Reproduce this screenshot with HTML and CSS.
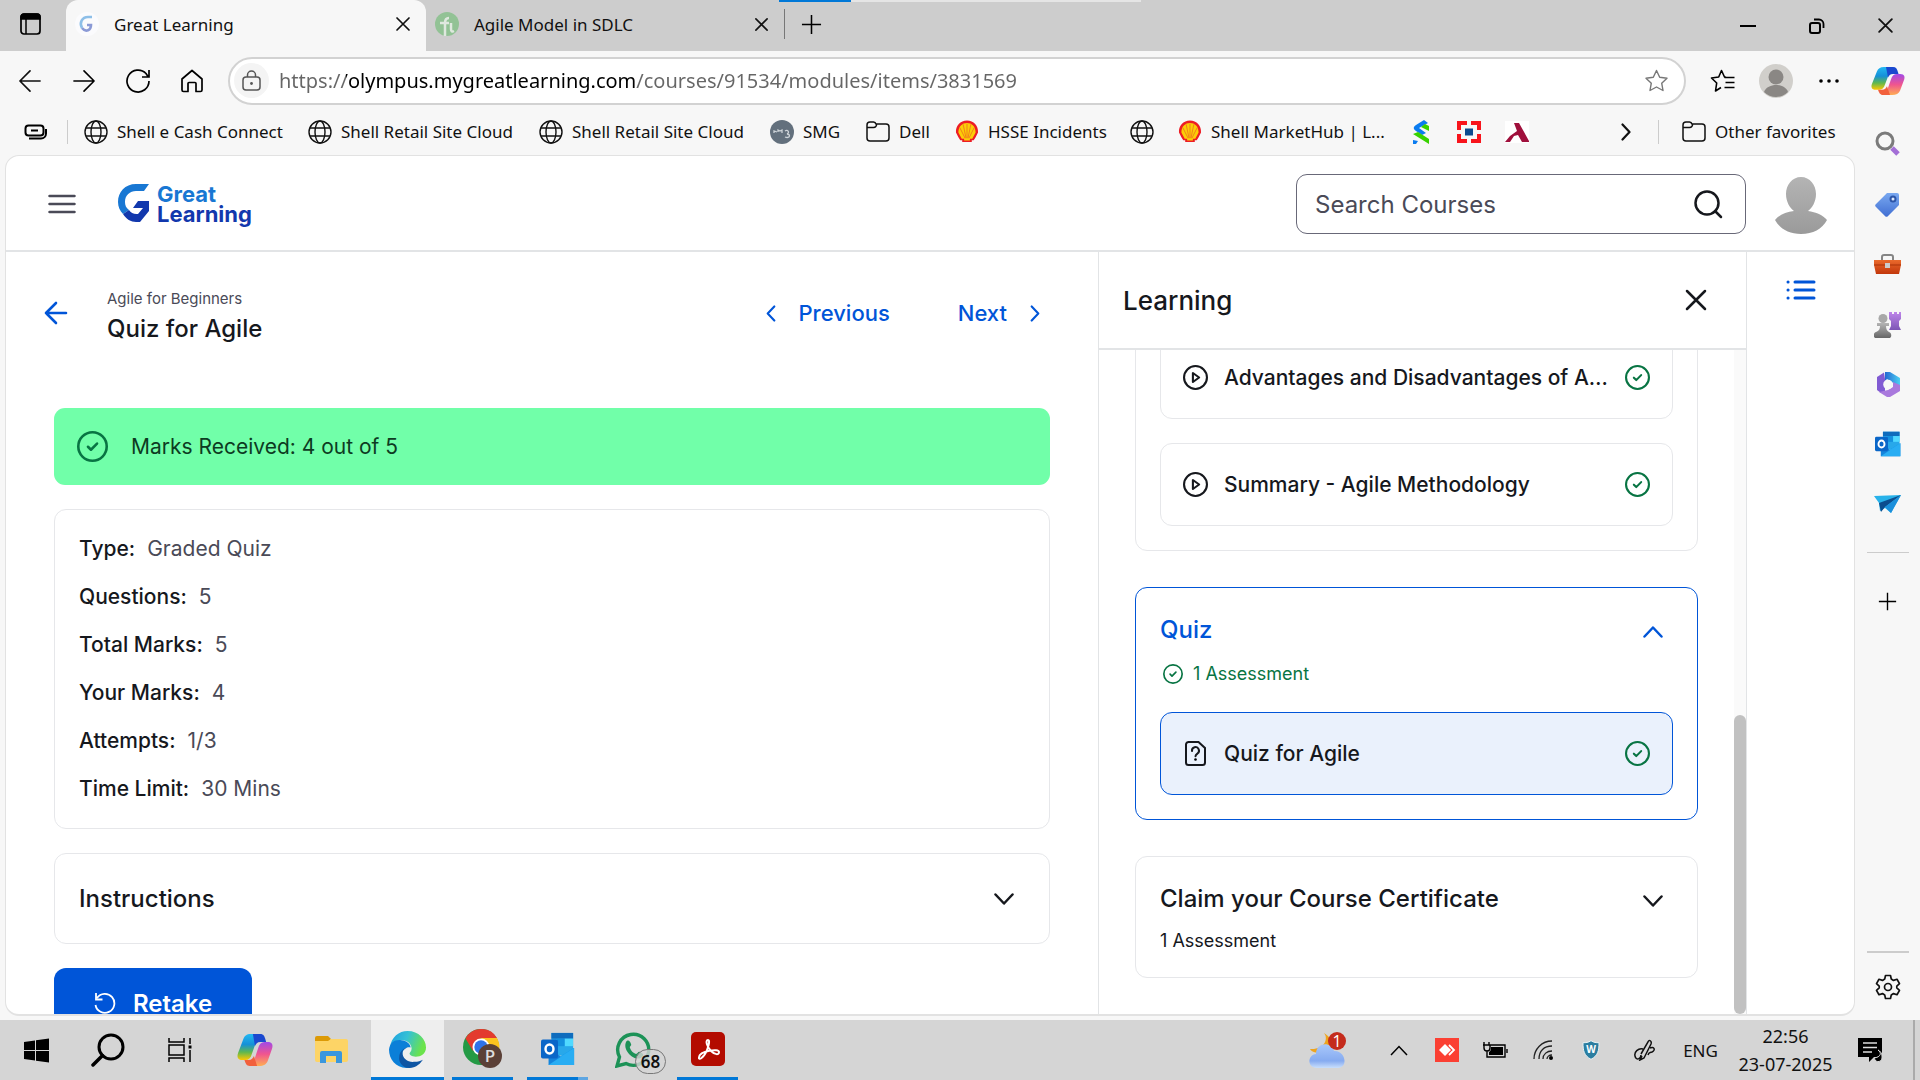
FILE: index.html
```html
<!DOCTYPE html>
<html lang="en">
<head>
<meta charset="utf-8">
<title>Great Learning</title>
<link rel="stylesheet" href="styles.css">
</head>
<body>
<svg class="defs" aria-hidden="true">
  <defs>
    <linearGradient id="cpA" x1="0" y1="0" x2="0" y2="1"><stop offset="0" stop-color="#22b8f2"/><stop offset=".4" stop-color="#1590d8"/><stop offset=".7" stop-color="#5fb84f"/><stop offset="1" stop-color="#ffc800"/></linearGradient>
    <linearGradient id="cpB" x1="0" y1="0" x2="0" y2="1"><stop offset="0" stop-color="#a049e8"/><stop offset=".5" stop-color="#f0558f"/><stop offset="1" stop-color="#ffae52"/></linearGradient>
    <linearGradient id="edA" x1="0" y1="0" x2="1" y2=".3"><stop offset="0" stop-color="#1b9de2"/><stop offset=".5" stop-color="#35c1d5"/><stop offset="1" stop-color="#6be34b"/></linearGradient>
    <linearGradient id="gray" x1="0" y1="0" x2="0" y2="1"><stop offset="0" stop-color="#b4b4b4"/><stop offset="1" stop-color="#9a9a9a"/></linearGradient>
    <linearGradient id="tagG" x1="0" y1="0" x2="0" y2="1"><stop offset="0" stop-color="#79a8f0"/><stop offset="1" stop-color="#416fd3"/></linearGradient>
    <linearGradient id="boxG" x1="0" y1="0" x2="0" y2="1"><stop offset="0" stop-color="#ea6a2c"/><stop offset="1" stop-color="#c2370b"/></linearGradient>
    <linearGradient id="pur" x1="0" y1="0" x2="0" y2="1"><stop offset="0" stop-color="#be85ea"/><stop offset="1" stop-color="#7d57b5"/></linearGradient>
    <linearGradient id="pawn" x1="0" y1="0" x2="0" y2="1"><stop offset="0" stop-color="#b5b5b5"/><stop offset="1" stop-color="#666"/></linearGradient>
    <linearGradient id="cyan" x1="0" y1="0" x2="1" y2="0"><stop offset="0" stop-color="#2468d2"/><stop offset="1" stop-color="#4cd0f2"/></linearGradient>
    <linearGradient id="cloud" x1="0" y1="0" x2="0" y2="1"><stop offset="0" stop-color="#a9c8fb"/><stop offset=".7" stop-color="#86abf0"/><stop offset="1" stop-color="#c9dffc"/></linearGradient>
  </defs>
  <symbol id="globe" viewBox="0 0 24 24"><g fill="none" stroke="#111" stroke-width="1.4"><circle cx="12" cy="12" r="11"/><ellipse cx="12" cy="12" rx="5" ry="11"/><path d="M2 8h20M2 16h20"/></g></symbol>
  <symbol id="folder" viewBox="0 0 24 24"><path d="M1 5a3 3 0 0 1 3-3h3.500a3 3 0 0 1 2.500 2H20a3 3 0 0 1 3 3v11a3 3 0 0 1-3 3H4a3 3 0 0 1-3-3zM1 7.500h6.500a3 3 0 0 0 3-3.500" fill="none" stroke="#111" stroke-width="1.500" stroke-linejoin="round"/></symbol>
  <symbol id="shell" viewBox="0 0 24 24"><path d="M7 23v-2H5L3 18 .5 13C0 6 5 .5 12 .5S24 6 23.500 13L21 18l-2 3h-2v2z" fill="#ed1c24"/><path d="M9 21.500v-2H6.500L3 13C3 6.500 7 3 12 3s9 3.500 9 10l-3.500 6.500H15v2z" fill="#fbce07"/><path d="M12 19V4M11 19 8 4.500M13 19l3-14.500M10 19 4.500 8M14 19l5.500-11" stroke="#ee5a24" stroke-width=".7"/></symbol>
  <symbol id="x" viewBox="0 0 16 16"><path d="M2 2l12 12M14 2 2 14" stroke="currentColor" stroke-width="1.700" stroke-linecap="round"/></symbol>
  <symbol id="plus" viewBox="0 0 22 22"><path d="M11 1v20M1 11h20" stroke="#000" stroke-width="1.600"/></symbol>
  <symbol id="check" viewBox="0 0 24 24"><g fill="none" stroke="currentColor" stroke-width="2"><circle cx="12" cy="12" r="11"/><path d="m8.500 12.200 2.300 2.300 4.700-4.800" stroke-linecap="round" stroke-linejoin="round"/></g></symbol>
  <symbol id="play" viewBox="0 0 24 24"><g fill="none" stroke="currentColor" stroke-width="2"><circle cx="12" cy="12" r="11"/><path d="M9.500 7.700v8.600l6-4.300z" stroke-linejoin="round"/></g></symbol>
  <symbol id="chev" viewBox="0 0 20 12"><path d="m1.500 1.500 8.500 9 8.500-9" fill="none" stroke="currentColor" stroke-width="2.500" stroke-linecap="round" stroke-linejoin="round"/></symbol>
  <symbol id="chevr" viewBox="0 0 10 18"><path d="m1.500 1.500 7 7.500-7 7.500" fill="none" stroke="currentColor" stroke-width="2.200" stroke-linecap="round" stroke-linejoin="round"/></symbol>
  <symbol id="arrow" viewBox="0 0 24 24"><path d="M23 12H1M12 1 1 12l11 11" fill="none" stroke="currentColor" stroke-width="1.800" stroke-linecap="round" stroke-linejoin="round"/></symbol>
  <symbol id="copilot" viewBox="0 0 34 34"><path d="M13 1h11c-3 0-4 2-5 5l-5 15c-1 4-3 6-6 6H5c-5 0-5-4-4-7L6 6c1-3 3-5 7-5z" fill="url(#cpA)"/><path d="M15 1h7c3 0 4 2 5 6l.5 2H22c-3 0-4 2-5 4z" fill="#1a48cf"/><path d="M21 33H11c3 0 4-2 5-5l4-13c1-4 3-6 6-6h3c5 0 5 4 4 7l-4 12c-1 3-4 5-8 5z" fill="url(#cpB)"/><path d="M19 33h-7c-3 0-4-3-5-6h4c3 0 4-2 5-4z" fill="#f2603c"/></symbol>
  <symbol id="outlook" viewBox="0 0 36 36"><path d="M11 1h23v24H11z" fill="#28a8ea"/><path d="M11 1h23v6H11z" fill="#0f6cbd"/><path d="M25 7h9v8h-9z" fill="#50d9ff"/><path d="M17 7h8v8h-8z" fill="#1490df"/><path d="M8 17l13 9 14-9v18H8z" fill="#1484dc"/><path d="M35 17v18L20 26z" fill="#1fa4ef"/><path d="M35 17 8 35h27z" fill="#29adf3"/><rect y="8" width="18" height="20" rx="2" fill="#0a66c8"/><ellipse cx="9" cy="18" rx="4.200" ry="4.800" fill="none" stroke="#fff" stroke-width="2.600"/></symbol>
</svg>

<header class="tabstrip">
  <button class="icon-btn workspaces" aria-label="Tab actions"><svg width="21" height="22" viewBox="0 0 21 22"><rect x="1" y="1" width="19" height="20" rx="3" fill="none" stroke="#000" stroke-width="1.700"/><path d="M1 6V4a3 3 0 0 1 3-3h13a3 3 0 0 1 3 3v2zM6 6v15" stroke="#000" stroke-width="1.500"/></svg></button>
  <div class="tab active">
    <svg width="24" height="24" viewBox="0 0 24 24"><circle cx="12" cy="12" r="12" fill="#fbfbfd"/><path d="M17 5h-4C7 5 4 11 7 16" fill="none" stroke="#8dbfe8" stroke-width="2.600"/><path d="M7 16c4 5 9 2 9-3h-4" fill="none" stroke="#8b9ad6" stroke-width="2.600"/></svg>
    <span class="tab-title">Great Learning</span>
    <button class="icon-btn" aria-label="Close tab"><svg width="16" height="16"><use href="#x"/></svg></button>
  </div>
  <div class="tab">
    <svg width="24" height="24" viewBox="0 0 24 24"><circle cx="12" cy="12" r="12" fill="#92c295"/><path d="M10 24V11c0-3 1-5 4-5M5 11h9M16 11v6c0 2 1 3 3 2" fill="none" stroke="#dfe8df" stroke-width="2.500"/></svg>
    <span class="tab-title">Agile Model in SDLC</span>
    <button class="icon-btn" aria-label="Close tab"><svg width="15" height="15"><use href="#x"/></svg></button>
  </div>
  <button class="icon-btn new-tab" aria-label="New tab"><svg width="21" height="21"><use href="#plus"/></svg></button>
  <div class="window-btns">
    <button class="icon-btn" aria-label="Minimize"><svg width="16" height="16"><path d="M0 8h16" stroke="#000" stroke-width="2"/></svg></button>
    <button class="icon-btn" aria-label="Restore"><svg width="16" height="16" viewBox="0 0 16 16"><rect x="1" y="5" width="10" height="10" rx="2" fill="none" stroke="#000" stroke-width="2"/><path d="M5 1.500h5a4.500 4.500 0 0 1 4.500 4.500v4" fill="none" stroke="#000" stroke-width="1.800"/></svg></button>
    <button class="icon-btn" aria-label="Close"><svg width="17" height="17"><use href="#x"/></svg></button>
  </div>
  <div class="progress"><span></span></div>
</header>

<div class="browser">
  <div class="window">
    <nav class="toolbar" aria-label="Browser">
      <button class="icon-btn" aria-label="Back"><svg width="24" height="22"><use href="#arrow"/></svg></button>
      <button class="icon-btn" aria-label="Forward"><svg width="24" height="22" viewBox="0 0 24 24"><path d="M1 12h22M12 1l11 11-11 11" fill="none" stroke="#000" stroke-width="1.700" stroke-linecap="round" stroke-linejoin="round"/></svg></button>
      <button class="icon-btn" aria-label="Reload"><svg width="24" height="24" viewBox="0 0 24 24"><path d="M23 12A11 11 0 1 1 20 4.500l2 3M23 1v7h-7" fill="none" stroke="#000" stroke-width="1.700"/></svg></button>
      <button class="icon-btn" aria-label="Home"><svg width="24" height="24" viewBox="0 0 24 24"><path d="M2 10 12 1.500 22 10v11a1.500 1.500 0 0 1-1.500 1.500H16v-8a1 1 0 0 0-1-1H9a1 1 0 0 0-1 1v8H3.500A1.500 1.500 0 0 1 2 21z" fill="none" stroke="#000" stroke-width="1.700" stroke-linejoin="round"/></svg></button>
      <div class="address">
        <button class="lock" aria-label="Site information"><svg width="19" height="21" viewBox="0 0 19 21"><rect x="1" y="7" width="17" height="13" rx="3" fill="none" stroke="#555" stroke-width="1.500"/><path d="M5.500 7V5a4 4 0 0 1 8 0v2" fill="none" stroke="#555" stroke-width="1.500"/><circle cx="9.500" cy="13.500" r="1.400" fill="#555"/></svg></button>
        <input class="url" type="text" aria-label="Address" value="https://olympus.mygreatlearning.com/courses/91534/modules/items/3831569">
        <button class="icon-btn" aria-label="Add to favorites"><svg width="25" height="24" viewBox="0 0 24 24"><path d="m12 1.500 3.200 6.700 7.300 1-5.300 5 1.300 7.300L12 18l-6.500 3.500 1.300-7.300-5.300-5 7.300-1z" fill="none" stroke="#777" stroke-width="1.400" stroke-linejoin="round"/></svg></button>
      </div>
      <button class="icon-btn" aria-label="Favorites"><svg width="25" height="24" viewBox="0 0 24 24"><path d="m15.500 8.200-1.500-.2L11 1.500 8.200 8 1 9l5.200 5-1.200 8 5.500-3.500" fill="none" stroke="#000" stroke-width="1.600" stroke-linejoin="round"/><path d="M14 8.500h10M15 13.500h9M14 18.500h10" stroke="#000" stroke-width="1.600"/></svg></button>
      <button class="icon-btn" aria-label="Profile"><svg width="34" height="34" viewBox="0 0 34 34"><circle cx="17" cy="17" r="17" fill="#d1cfcb"/><circle cx="17" cy="13" r="7.500" fill="#8a8784"/><path d="M5 28c2-5 7-7 12-7s10 2 12 7a17 17 0 0 1-24 0z" fill="#8a8784"/></svg></button>
      <button class="icon-btn more" aria-label="More"><svg width="20" height="6" viewBox="0 0 20 6"><circle cx="2" cy="3" r="1.800"/><circle cx="10" cy="3" r="1.800"/><circle cx="18" cy="3" r="1.800"/></svg></button>
    </nav>

    <nav class="bookmarks" aria-label="Favorites bar">
      <button class="icon-btn" aria-label="Workspaces"><svg width="24" height="16" viewBox="0 0 24 16"><rect x="1.500" y="1.500" width="18" height="10" rx="3" fill="none" stroke="#000" stroke-width="2"/><path d="M7 6.500h7M5 14.500h12a5 5 0 0 0 5-5V5" fill="none" stroke="#000" stroke-width="2"/></svg></button>
      <i class="sep"></i>
      <a href="#"><svg width="24" height="24"><use href="#globe"/></svg>Shell e Cash Connect</a>
      <a href="#"><svg width="24" height="24"><use href="#globe"/></svg>Shell Retail Site Cloud</a>
      <a href="#"><svg width="24" height="24"><use href="#globe"/></svg>Shell Retail Site Cloud</a>
      <a href="#"><svg width="24" height="24" viewBox="0 0 24 24"><circle cx="12" cy="12" r="12" fill="#63707d"/><path d="M4 13v-2l3 1M8 12v-2l2 1 2-1v3M15 11c3-2 5 2 2 3 4 0 3 5-2 3" fill="none" stroke="#cdd3d8" stroke-width="1.300"/></svg>SMG</a>
      <a href="#"><svg width="24" height="24"><use href="#folder"/></svg>Dell</a>
      <a href="#"><svg width="24" height="23"><use href="#shell"/></svg>HSSE Incidents</a>
      <a href="#" aria-label="Site"><svg width="24" height="24"><use href="#globe"/></svg></a>
      <a href="#"><svg width="24" height="23"><use href="#shell"/></svg>Shell MarketHub | L...</a>
      <a href="#" aria-label="Bank"><svg width="16" height="24" viewBox="0 0 16 24"><path d="M11 0 3 5c-3 2-3 4 0 6l6 4 4-2-7-5 9-5z" fill="#0a7cf0"/><path d="m0 14 5-2 11 7v5zM8 7l4-3 4 2v5z" fill="#38d200"/><path d="M0 20l5 1-2 3H0z" fill="#0a7cf0"/></svg></a>
      <a href="#" aria-label="HDFC"><svg width="24" height="22" viewBox="0 0 24 22"><path fill="#f8141c" d="M0 0h10v4H4v5H0zM14 0h10v9h-4V4h-6zM0 13h4v5h6v4H0zM20 13h4v9H14v-4h6z"/><path fill="#0b4a8f" d="M8 7.500h8v7H8z"/></svg></a>
      <a href="#" aria-label="Axis"><svg width="24" height="22" viewBox="0 0 24 22"><path fill="#fff" d="M0 0h24v22H0z"/><path fill="#a0103c" d="M9 2h5l10 18v1h-7l-4-7-4 1-4 6H0l5-6 7-5z"/></svg></a>
      <button class="icon-btn" aria-label="More favorites"><svg width="10" height="18"><use href="#chevr"/></svg></button>
      <i class="sep"></i>
      <a href="#"><svg width="24" height="24"><use href="#folder"/></svg>Other favorites</a>
    </nav>

    <div class="page">
      <header class="site-header">
        <button class="icon-btn menu" aria-label="Menu"><svg width="28" height="20"><path d="M1.500 2h25M1.500 10h25M1.500 18h25" stroke="#4a4a57" stroke-width="2.500" stroke-linecap="round"/></svg></button>
        <a class="logo" href="#">
          <svg width="32" height="39" viewBox="0 0 32 39"><path d="M31 0H18C7 0 0 8 0 18c0 5 2 9 5 12l6-4c-3-2-4-5-4-8C7 11 12 7 18 7h8z" fill="#1877d3"/><path d="m5 30 6-4c2 3 5 4.500 9 4l5-6H15l5-7h11v10l-9 11h-4C13 38 8 35 5 30z" fill="#1238ad"/></svg>
          <span class="logo-text"><span class="great">Great</span><span>Learning</span></span>
        </a>
        <label class="search">
          <input type="search" placeholder="Search Courses" aria-label="Search Courses">
          <svg width="29" height="29" viewBox="0 0 29 29"><circle cx="13" cy="13" r="11.500" fill="none" stroke="#16181d" stroke-width="2.500"/><path d="m21 21 6 6" stroke="#16181d" stroke-width="2.500" stroke-linecap="round"/></svg>
        </label>
        <button class="icon-btn avatar" aria-label="Account"><svg width="52" height="57" viewBox="0 0 52 57"><path d="M26 0c9 0 15 8 15 17 0 8-4 14-8 17 8 1 15 4 19 9-5 9-14 14-26 14S5 52 0 43c4-5 11-8 19-9-4-3-8-9-8-17C11 8 17 0 26 0z" fill="url(#gray)"/></svg></button>
      </header>

      <div class="columns">
        <main class="content">
          <div class="lesson-head">
            <a class="back" href="#" aria-label="Back"><svg width="24" height="24" viewBox="0 0 24 24"><path d="M22 12H2M12 2 2 12l10 10" fill="none" stroke="currentColor" stroke-width="2.600" stroke-linecap="round" stroke-linejoin="round"/></svg></a>
            <div class="titles"><p>Agile for Beginners</p><h1>Quiz for Agile</h1></div>
            <nav class="pager">
              <a href="#"><svg class="flip" width="10" height="17"><use href="#chevr"/></svg>Previous</a>
              <a href="#">Next<svg width="10" height="17"><use href="#chevr"/></svg></a>
            </nav>
          </div>
          <div class="stack">
            <div class="marks"><svg width="31" height="31"><use href="#check"/></svg>Marks Received: 4 out of 5</div>
            <dl class="card facts">
              <div><dt>Type:</dt><dd>Graded Quiz</dd></div>
              <div><dt>Questions:</dt><dd>5</dd></div>
              <div><dt>Total Marks:</dt><dd>5</dd></div>
              <div><dt>Your Marks:</dt><dd>4</dd></div>
              <div><dt>Attempts:</dt><dd>1/3</dd></div>
              <div><dt>Time Limit:</dt><dd>30 Mins</dd></div>
            </dl>
            <button class="card instructions">Instructions<svg width="20" height="12"><use href="#chev"/></svg></button>
            <button class="retake"><svg width="22" height="22" viewBox="0 0 22 22"><path d="M3 6a9.500 9.500 0 1 1-1.500 7M2 1v6.500h6.500" fill="none" stroke="#fff" stroke-width="1.800"/></svg>Retake</button>
          </div>
        </main>

        <aside class="panel">
          <div class="panel-head"><h2>Learning</h2><button class="icon-btn" aria-label="Close panel"><svg width="24" height="24"><use href="#x"/></svg></button></div>
          <div class="panel-body">
            <div class="modules">
              <section class="card module">
                <a class="item" href="#"><svg width="25" height="25"><use href="#play"/></svg><span>Advantages and Disadvantages of Agile Methodology</span><svg class="done" width="25" height="25"><use href="#check"/></svg></a>
                <a class="item" href="#"><svg width="25" height="25"><use href="#play"/></svg><span>Summary - Agile Methodology</span><svg class="done" width="25" height="25"><use href="#check"/></svg></a>
              </section>
              <section class="card module current">
                <button class="module-head"><span class="module-text"><strong>Quiz</strong><small class="done"><svg width="20" height="20"><use href="#check"/></svg>1 Assessment</small></span><svg class="up" width="20" height="12"><use href="#chev"/></svg></button>
                <a class="item" href="#"><svg width="25" height="25" viewBox="0 0 25 25"><path d="M5 1h10.500L22 7v14.500a2.500 2.500 0 0 1-2.500 2.500H5.500A2.500 2.500 0 0 1 3 21.500v-18A2.500 2.500 0 0 1 5.500 1z" fill="none" stroke="currentColor" stroke-width="2"/><path d="M9 10a3.500 3.500 0 1 1 5.500 2.500c-1.300 1-2 1.500-2 2.700" fill="none" stroke="currentColor" stroke-width="2" stroke-linecap="round"/><circle cx="12.500" cy="18.500" r="1.300"/></svg><span>Quiz for Agile</span><svg class="done" width="25" height="25"><use href="#check"/></svg></a>
              </section>
              <section class="card module">
                <button class="module-head"><span class="module-text"><strong>Claim your Course Certificate</strong><small>1 Assessment</small></span><svg width="20" height="12"><use href="#chev"/></svg></button>
              </section>
            </div>
            <div class="scrollbar"><span></span></div>
          </div>
        </aside>

        <div class="rail"><button class="icon-btn" aria-label="Outline"><svg width="30" height="20" viewBox="0 0 30 20"><path d="M9 2h19M9 10h19M9 18h19M2 2h.1M2 10h.1M2 18h.1" stroke="#0055d8" stroke-width="3" stroke-linecap="round"/></svg></button></div>
      </div>
    </div>
  </div>

  <nav class="sidebar" aria-label="Sidebar">
    <button class="icon-btn first" aria-label="Copilot"><svg width="34" height="30" viewBox="0 0 34 34" preserveAspectRatio="none"><use href="#copilot" width="34" height="34"/></svg></button>
    <button class="icon-btn" aria-label="Search"><svg width="26" height="26" viewBox="0 0 26 26"><circle cx="10" cy="10" r="8" fill="none" stroke="#7b7b7b" stroke-width="3"/><path d="m17 17 6 6" stroke="#a36fd6" stroke-width="5"/></svg></button>
    <button class="icon-btn" aria-label="Shopping"><svg width="25" height="25" viewBox="0 0 25 25"><path d="M12 1h10a2 2 0 0 1 2 2v10L13 24a2 2 0 0 1-3 0L1 15a2 2 0 0 1 0-3z" fill="url(#tagG)"/><circle cx="18" cy="7" r="2.500" fill="#dce8fd" stroke="#2c55a8" stroke-width="2"/></svg></button>
    <button class="icon-btn" aria-label="Tools"><svg width="27" height="21" viewBox="0 0 27 21"><path d="M8 7V3a2 2 0 0 1 2-2h7a2 2 0 0 1 2 2v4" fill="none" stroke="#858585" stroke-width="2"/><path d="M0 6h27v5l-2 9H2L0 11z" fill="url(#boxG)"/><path d="M0 11h27" stroke="#a93209"/><path d="M11 9h5v5h-5z" fill="#ccc"/></svg></button>
    <button class="icon-btn" aria-label="Games"><svg width="27" height="27" viewBox="0 0 27 27"><path d="M15 1h3v2h2V1h3v2h2V1h2v7l-2 2v5l2 4H15l2-4v-5l-2-2z" fill="url(#pur)"/><circle cx="9" cy="7.500" r="4.500" fill="#a8a8a8"/><path d="M3 12h12v3h-3c0 3 1 5 3 6 3 1 3 6 0 6H2c-3 0-3-5 0-6 3-1 4-3 4-6H3z" fill="url(#pawn)"/></svg></button>
    <button class="icon-btn" aria-label="Microsoft 365"><svg width="26" height="27" viewBox="0 0 26 27"><path d="M9 1.500 2 6v13l4 3 4-2V8z" fill="#815bd3"/><path d="M10 1h5l10 6v9l-7-4-6-4-2 2V5z" fill="url(#cyan)"/><path d="M25 14v6l-10 6h-3l-8-5 9-2 5-3V11z" fill="#a979dd"/><circle cx="13" cy="13.500" r="4.800" fill="#f7f7f7"/></svg></button>
    <button class="icon-btn" aria-label="Outlook"><svg width="26" height="26"><use href="#outlook"/></svg></button>
    <button class="icon-btn" aria-label="Drop"><svg width="27" height="20" viewBox="0 0 27 20"><path d="M0 2 27 1 17 19l-6-5-5 3-1-8z" fill="#28b2ea"/><path d="M5 9 27 1 11 13l-4 5z" fill="#0c4d8e"/><path d="M11 13 27 1 17 19z" fill="#1b8fdb"/></svg></button>
    <hr>
    <button class="icon-btn" aria-label="Customize"><svg width="19" height="19"><use href="#plus"/></svg></button>
    <hr class="low">
    <button class="icon-btn" aria-label="Settings"><svg width="26" height="26" viewBox="0 0 26 26"><path d="M10.500 1.500h5l.8 3.600 2.200 1.300 3.500-1.100 2.500 4.300-2.700 2.500v1.800l2.700 2.500-2.500 4.300-3.500-1.100-2.200 1.300-.8 3.600h-5l-.8-3.600-2.200-1.300L4 20.700l-2.500-4.300 2.700-2.500v-1.800L1.500 9.600 4 5.300l3.500 1.100 2.200-1.300z" fill="none" stroke="#111" stroke-width="1.700" stroke-linejoin="round"/><circle cx="13" cy="13" r="3.500" fill="none" stroke="#111" stroke-width="1.700"/></svg></button>
  </nav>
</div>

<footer class="taskbar">
  <div class="apps">
    <button class="start" aria-label="Start"><svg width="25" height="25" viewBox="0 0 25 25"><path d="M0 4l11-1.500V12H0zM12 2.300 25 .5V12H12zM0 13h11v9.500L0 21zM12 13h13v11.500l-13-1.800z"/></svg></button>
    <button class="start" aria-label="Search"><svg width="34" height="34" viewBox="0 0 34 34"><circle cx="20" cy="14" r="12" fill="none" stroke="#000" stroke-width="3"/><path d="M11.500 22.500 2 32" stroke="#000" stroke-width="3.500" stroke-linecap="round"/></svg></button>
    <button class="start" aria-label="Task view"><svg width="24" height="24" viewBox="0 0 24 24"><path d="M1 0v4h15V0M1 24v-4h15v4M1 7h15v10H1zM22 0v6M22 12v12" fill="none" stroke="#000" stroke-width="1.500"/><path d="M20.500 7.500h3v3h-3z"/></svg></button>
    <button class="pinned" aria-label="Copilot"><svg width="36" height="34" viewBox="0 0 34 34" preserveAspectRatio="none"><use href="#copilot" width="34" height="34"/></svg></button>
    <button class="pinned" aria-label="File Explorer"><svg width="33" height="28" viewBox="0 0 33 28"><path d="M0 2a2 2 0 0 1 2-2h11l3 3-3 4H0z" fill="#dc9a06"/><path d="M0 5h13l3-2h15a2 2 0 0 1 2 2v19a2 2 0 0 1-2 2H2a2 2 0 0 1-2-2z" fill="#fdd466"/><path d="M5 27V17a2 2 0 0 1 2-2h18a2 2 0 0 1 2 2v10h-6v-7H11v7z" fill="#3b97dd"/></svg></button>
    <button class="open focused" aria-label="Microsoft Edge"><svg width="37" height="37" viewBox="0 0 36 36"><path d="M1 16C2 6 10 0 18 0c11 0 18 8 18 16 0 6-5 9-10 9-4 0-6-2-6-3s2-2 2-5c0-4-4-8-9-8C7 9 3 12 1 16z" fill="url(#edA)"/><path d="M0 18C1 11 6 8 12 9c5 0 9 4 9 7-3-1-8 1-8 7 0 7 5 12 10 12C9 39 0 29 0 18z" fill="#0b7fd8"/><path d="M13 21c0 6 6 10 12 9 3 0 6-1 8-2-4 6-9 8-13 8-7 0-11-6-10-11 0-4 3-8 8-9-3 1-5 3-5 5z" fill="#0e55a3"/></svg></button>
    <button class="open" aria-label="Chrome"><svg width="40" height="40" viewBox="0 0 40 40"><circle cx="18" cy="18" r="18" fill="#249a45"/><path d="M2.500 9.500A18 18 0 0 1 34 9H18l-8 13z" fill="#e33b2e"/><path d="M18 9h16a18 18 0 0 1-15 27l8-14z" fill="#fcc31e"/><circle cx="18" cy="18" r="8.500" fill="#fff"/><circle cx="18" cy="18" r="6.700" fill="#2f72e8"/><circle cx="27" cy="27" r="12" fill="#5b4037"/><text x="27" y="33" text-anchor="middle" class="glyph">P</text></svg></button>
    <button class="open multi" aria-label="Outlook"><svg width="36" height="34"><use href="#outlook"/></svg></button>
    <button class="whatsapp" aria-label="WhatsApp"><svg width="36" height="36" viewBox="0 0 36 36"><path d="M2 34l2.500-9A15.500 15.500 0 1 1 11 31.500z" fill="none" stroke="#1c9257" stroke-width="3.400"/><path d="M11 10c2-3 4-1 5 2 1 2-2 2-1 4 1 3 3 5 6 6 2 0 2-3 4-2 4 2 4 3 2 5-6 6-20-6-16-15z" fill="#1c9257"/></svg><span class="count">68</span></button>
    <button class="open" aria-label="Acrobat"><svg width="34" height="34" viewBox="0 0 34 34"><rect width="34" height="34" rx="5" fill="#b30b00"/><path d="M17 8c-3 0-1 7 3 11 4 4 8 4 8 1 0-4-19-1-20 5-1 4 5 1 8-7 2-5 3-10 1-10z" fill="none" stroke="#fff" stroke-width="2"/></svg></button>
  </div>
  <div class="tray">
    <button class="weather" aria-label="Weather"><svg width="37" height="37" viewBox="0 0 37 37"><path d="M15 1c5 6 0 17-14 16 2 5 18 6 21-3 1-6-2-10-7-13z" fill="#eea41d"/><path d="M8 36c-10 0-10-13-1-14 0-12 15-13 18-3 11-1 15 16 4 17z" fill="url(#cloud)"/><circle cx="28" cy="9" r="9" fill="#c42b1c"/><text x="28" y="15" text-anchor="middle" class="glyph small">1</text></svg></button>
    <button aria-label="Hidden icons"><svg width="18" height="11" viewBox="0 0 18 11"><path d="m1 10 8-8.500 8 8.500" fill="none" stroke="#000" stroke-width="1.500"/></svg></button>
    <button aria-label="AnyDesk"><svg width="24" height="24" viewBox="0 0 24 24"><path d="M0 0h24v24H0z" fill="#fb4033"/><path d="m10 6 6 6-6 6-6-6z" fill="#fff"/><path d="m14 7 5 5-5 5" fill="none" stroke="#fff" stroke-width="1.800"/></svg></button>
    <button aria-label="Battery"><svg width="25" height="18" viewBox="0 0 25 18"><path d="M5 4h17v12H4v-6M1 1v3M6 1v3M0 4h7v3a3 3 0 0 1-3 3 3 3 0 0 1-3-3V4M24 8v4" fill="none" stroke="#000" stroke-width="1.400"/><path d="M8 6h12v8H6v-3c2-1 2-3 2-5z"/></svg></button>
    <button aria-label="Wi-Fi"><svg width="20" height="20" viewBox="0 0 20 20"><path d="M1 19C1 9 9 1 19 1M6 19C6 11 11 6 19 6M10 19c0-5 4-8 9-8M14 19c0-2 2-4 5-4" fill="none" stroke="#222" stroke-width="1.300"/><circle cx="18" cy="18" r="2"/></svg></button>
    <button aria-label="Security"><svg width="18" height="20" viewBox="0 0 18 20"><path d="M9 .7c3 2 5 2 8 2 0 8-1 13-8 16.600C2 15.700 1 10.700 1 2.700c3 0 5 0 8-2z" fill="#2b7ea1" stroke="#e8f2f5"/><text x="9" y="13" text-anchor="middle" class="glyph tiny">W</text></svg></button>
    <button class="wide" aria-label="Pen"><svg width="22" height="22" viewBox="0 0 22 22"><path d="m9 17-2 4 4-2 7-14c1-3-2-5-3-2L8 15M10 10c-5-1-9 3-8 7 1 5 6 3 6-1M17 9c4-2 6 2 2 4-3 1-3 0-4 3" fill="none" stroke="#111" stroke-width="1.500"/></svg></button>
    <button class="wide">ENG</button>
    <button class="clock"><time>22:56</time><time>23-07-2025</time></button>
    <button class="wide" aria-label="Notifications"><svg width="25" height="25" viewBox="0 0 25 25"><path d="M0 0h24v19h-8l-5 5v-5H0z"/><path d="M5 5h14M5 9.500h14M5 14h9" stroke="#ddd" stroke-width="1.600"/><path d="M20 12c4 3 3 7-4 8 2 6 9 4 8-2 0-3-2-5-4-6z" stroke="#ddd"/></svg></button>
  </div>
</footer>
</body>
</html>
```
FILE: styles.css
```css
* { box-sizing: border-box; }
body {
  margin: 0; height: 100vh; overflow: hidden; display: flex; flex-direction: column;
  background: #f7f7f7; color: #16181d; font-family: Inter, "Liberation Sans", sans-serif;
}
button, input { font: inherit; color: inherit; }
button { border: 0; background: none; padding: 0; }
a { color: inherit; text-decoration: none; }
h1, h2, p, dl, dd { margin: 0; }
svg { flex: none; display: block; }
.defs { position: absolute; width: 0; height: 0; }
.icon-btn { display: grid; place-items: center; flex: none; }
.glyph { font: 600 17px "Open Sans", sans-serif; fill: #ddd; }
.glyph.small { font-weight: 400; font-size: 16px; fill: #fff; }
.glyph.tiny { font-weight: 700; font-size: 10px; fill: #fff; }

/* Browser tabs */
.tabstrip, .toolbar, .bookmarks, .taskbar { font-family: "Noto Sans", "Open Sans", sans-serif; color: #111; }
.tabstrip { position: relative; display: flex; height: 51px; flex: none; background: #cdcdcd; font-size: 17px; }
.workspaces { width: 66px; padding: 0 6px 3px 0; }
.tab { width: 358px; display: flex; align-items: center; gap: 15px; padding: 0 15px 3px 9px; }
.tab.active { width: 360px; background: #f7f7f7; border-radius: 12px 12px 0 0; }
.tab-title { flex: 1; }
.new-tab { width: 54px; height: 30px; margin-top: 9px; border-left: 1px solid #777; }
.window-btns { margin-left: auto; display: flex; }
.window-btns button { width: 69px; }
.progress { position: absolute; top: 0; left: 779px; width: 362px; height: 2px; background: #e5e5e5; }
.progress span { display: block; width: 72px; height: 2px; background: #0078d7; }

.browser { flex: 1; min-height: 0; display: flex; }
.window { flex: 1; min-width: 0; display: flex; flex-direction: column; }

.toolbar { height: 57px; flex: none; display: flex; align-items: center; padding: 2px 0 0 3px; }
.toolbar > .icon-btn { width: 54px; }
.toolbar > .more { width: 52px; }
.address {
  flex: 1; height: 48px; margin: 0 9px; padding: 0 15px 0 4px; display: flex; align-items: center; gap: 10px;
  background: #fff; border: 2px solid #d2d2d2; border-radius: 24px;
}
.lock { width: 35px; height: 35px; display: grid; place-items: center; border-radius: 50%; background: #f4f4f4; }
.url {
  flex: 1; border: 0; outline: 0; padding: 0; height: 36px; font-size: 20px; color: transparent;
  background: linear-gradient(90deg, #666 67px, #000 67px, #000 357px, #666 357px);
  -webkit-background-clip: text; background-clip: text;
}

.bookmarks {
  height: 47px; flex: none; display: grid; align-items: center; font-size: 17px; white-space: nowrap;
  grid-template-columns: 48px 17px 224px 231px 231px 96px 89px 175px 48px 235px 44px 48px 24px 1fr 24px 173px;
  padding-left: 19px;
}
.bookmarks > .icon-btn { justify-self: start; margin-left: 5px; }
.bookmarks > .icon-btn:nth-last-child(3) { justify-self: end; margin-right: 27px; }
.bookmarks a { display: flex; align-items: center; gap: 9px; }
.sep { width: 1px; height: 24px; background: #ccc; }

/* Web page */
.page {
  flex: 1; min-height: 0; margin: 0 0 4px 5px; display: flex; flex-direction: column; overflow: hidden;
  background: #fff; border: 1px solid #e2e2e2; border-bottom-width: 2px; border-radius: 14px;
}
.site-header { height: 96px; flex: none; display: flex; align-items: center; padding: 2px 27px 0 42px; border-bottom: 2px solid #e2e4e6; }
.logo { display: flex; align-items: flex-start; gap: 7px; margin-left: 42px; }
.logo-text { display: flex; flex-direction: column; font-weight: 700; font-size: 22px; line-height: 20px; color: #1238ad; }
.great { color: #1877d3; }
.search {
  width: 450px; height: 60px; margin: 0 29px 0 auto; padding: 0 22px 0 18px; display: flex; align-items: center;
  border: 1px solid #686878; border-radius: 11px;
}
.search input { flex: 1; min-width: 0; border: 0; outline: 0; padding: 0; background: none; font-size: 24px; }
.search input::placeholder { color: #4a4a57; opacity: 1; }
.avatar { padding-top: 2px; }

.columns { flex: 1; min-height: 0; display: flex; }
.content { flex: 1; min-width: 0; overflow: hidden; padding: 36px 48px 0 38px; }
.lesson-head { display: flex; align-items: center; height: 50px; }
.back { color: #0055d8; }
.titles { margin-left: 39px; padding-top: 10px; flex: 1; display: flex; flex-direction: column; gap: 2px; }
.titles p { font-size: 15px; line-height: 20px; color: #4a4a57; }
h1 { font-size: 24px; line-height: 36px; font-weight: 500; }
.pager { display: flex; gap: 68px; padding-right: 10px; font-size: 22px; font-weight: 500; color: #0055d8; }
.pager a { display: flex; align-items: center; gap: 23px; }
.flip { transform: rotate(180deg); }
.stack { margin: 70px 0 0 10px; display: flex; flex-direction: column; gap: 24px; }
.marks {
  height: 77px; padding-left: 23px; display: flex; align-items: center; gap: 23px; border-radius: 11px;
  background: #71ffa9; color: #0d3b22; font-size: 21px;
}
.marks svg { color: #087443; }
.card { border: 1px solid #e6e7ea; border-radius: 12px; background: #fff; }
.facts { padding: 15px 24px; font-size: 21px; line-height: 48px; }
.facts div { display: flex; gap: 12px; }
dt { font-weight: 500; }
dd { color: #4a4a57; }
.instructions { height: 91px; padding: 0 35px 0 24px; display: flex; align-items: center; justify-content: space-between; font-size: 24px; font-weight: 500; }
.retake {
  width: 198px; height: 70px; flex: none; display: flex; align-items: center; justify-content: center; gap: 17px;
  background: #0055d8; color: #fff; border-radius: 12px; font-size: 24px; font-weight: 600;
}

.panel { width: 649px; flex: none; display: flex; flex-direction: column; border: solid #e2e4e6; border-width: 0 1px; }
.panel-head { height: 98px; flex: none; display: flex; align-items: center; justify-content: space-between; padding: 0 38px 0 24px; border-bottom: 2px solid #e2e4e6; }
h2 { font-size: 26px; font-weight: 500; }
.panel-body { flex: 1; min-height: 0; display: flex; overflow: hidden; }
.modules { flex: 1; min-width: 0; padding: 0 36px 36px; display: flex; flex-direction: column; justify-content: flex-end; gap: 36px; }
.module { padding: 24px; display: flex; flex-direction: column; gap: 24px; flex: none; }
.item {
  height: 83px; padding: 0 22px; display: flex; align-items: center; gap: 16px;
  border: 1px solid #e6e7ea; border-radius: 12px; font-size: 21px; font-weight: 500;
}
.item span { flex: 1; min-width: 0; overflow: hidden; text-overflow: ellipsis; white-space: nowrap; }
.done { color: #087443; }
.current, .current .item { border-color: #0055d8; }
.current .item { background: #eaf1fc; }
.module-head { display: flex; align-items: flex-start; justify-content: space-between; padding-right: 10px; text-align: left; }
.module-head > svg { margin-top: 14px; }
.module-text { display: flex; flex-direction: column; gap: 12px; }
.module-head strong { font-size: 24px; line-height: 36px; font-weight: 500; }
.module-head small { display: flex; align-items: center; gap: 10px; font-size: 18px; line-height: 24px; }
.current strong, .current .up { color: #0055d8; }
.current small { padding-left: 3px; line-height: 28px; }
.up { transform: rotate(180deg); }
.scrollbar { width: 12px; flex: none; display: flex; align-items: flex-end; background: #fafafa; }
.scrollbar span { width: 12px; height: 45%; background: #c1c1c1; border-radius: 6px; }
.rail { width: 107px; flex: none; display: flex; justify-content: center; align-items: flex-start; padding-top: 28px; }

/* Edge sidebar */
.sidebar { width: 65px; flex: none; display: flex; flex-direction: column; align-items: center; padding-bottom: 3px; }
.sidebar .icon-btn { width: 60px; height: 60px; }
.sidebar .first { height: 63px; padding-bottom: 3px; }
.sidebar hr { width: 42px; margin: 18px 0; border: 0; border-top: 1px solid #ccc; }
.sidebar hr.low { margin: auto 0 4px; border-top-width: 2px; }

/* Windows taskbar */
.taskbar { height: 60px; flex: none; display: flex; justify-content: space-between; background: #d5d5d5; font-size: 17px; }
.apps, .tray { display: flex; }
.taskbar button { display: flex; align-items: center; justify-content: center; }
.apps button { width: 75px; position: relative; }
.apps .start { width: 72px; }
.apps .pinned { width: 77px; }
.apps .open { border-bottom: 3px solid #0078d7; width: 61px; margin: 0 7px; padding-top: 1px; }
.apps .focused { background: #eee; width: 73px; margin: 0 1px; }
.apps .multi { border-image: linear-gradient(90deg, #0078d7 80%, #5ea6e2 80%) 3; }
.count {
  position: absolute; right: 4px; bottom: 6px; width: 31px; height: 25px; display: grid; place-items: center;
  background: #d5d5d5cc; border: 1px solid #777; border-radius: 13px; font-size: 17px; font-weight: 600;
}
.tray { border-right: 2px solid #aaa; margin-right: 5px; padding-right: 14px; }
.tray button { width: 48px; }
.tray .weather { width: 96px; }
.tray .wide { width: 57px; }
.tray .clock { width: 113px; flex-direction: column; font-size: 18px; line-height: 28px; }
```
